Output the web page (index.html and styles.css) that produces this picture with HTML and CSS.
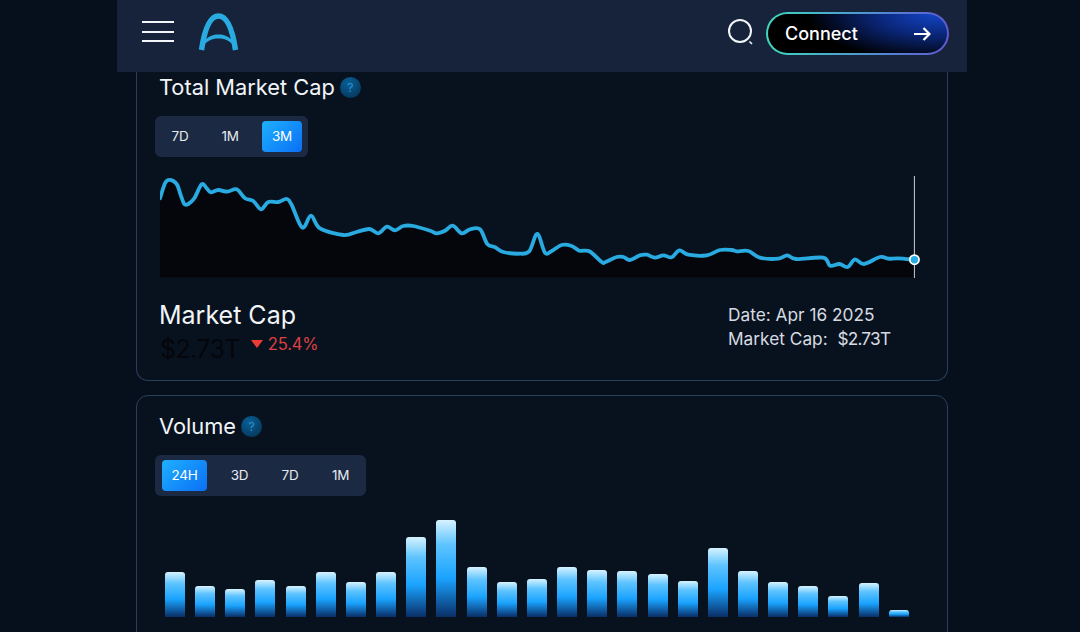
FILE: index.html
```html
<!DOCTYPE html>
<html lang="en">
<head>
  <meta charset="UTF-8">
  <title>Market Overview</title>
  <link rel="stylesheet" href="styles.css">
</head>
<body>
  <div class="page">
    <header class="topbar">
      <div class="menu-icon"><span></span><span></span><span></span></div>
      <svg class="logo" width="42" height="38" viewBox="0 0 42 38">
        <path d="M3.5 37 C6 20 11 3 20.5 3 C30 3 35 20 37.5 37" fill="none" stroke="#29abe2" stroke-width="5.5"/>
        <path d="M5 33 C10 27 15 25.5 20.5 25.5 C26 25.5 31 27 36 33 L35.5 28 C30 23 26 21.5 20.5 21.5 C15 21.5 11 23 5.5 28 Z" fill="#29abe2"/>
      </svg>
      <div class="spacer"></div>
      <svg class="search" width="28" height="28" viewBox="0 0 28 28">
        <circle cx="13" cy="13" r="11" fill="none" stroke="#f2f5f8" stroke-width="2"/>
        <path d="M22.5 23.5 L25 26" stroke="#f2f5f8" stroke-width="1.6"/>
      </svg>
      <button class="connect">
        <span>Connect</span>
        <svg width="18" height="14" viewBox="0 0 18 14">
          <path d="M1 7 H16.5 M10.5 1 L16.5 7 L10.5 13" fill="none" stroke="#fff" stroke-width="2.2"/>
        </svg>
      </button>
    </header>

    <main class="content">
      <section class="card card-top">
        <div class="card-title">Total Market Cap <span class="help">?</span></div>
        <div class="tabs">
          <span class="tab">7D</span>
          <span class="tab">1M</span>
          <span class="tab active">3M</span>
        </div>
        <svg class="line-chart" width="770" height="112" viewBox="160 170 770 112">
          <path id="area" fill="#04060c" d=""/>
          <path id="line" fill="none" stroke="#29abe2" stroke-width="3.8" stroke-linejoin="round" stroke-linecap="round" d=""/>
          <line x1="914.4" y1="176" x2="914.4" y2="278" stroke="#c9ced6" stroke-width="1"/>
          <circle cx="914.4" cy="259.7" r="4.6" fill="#29abe2" stroke="#fff" stroke-width="1.8"/>
        </svg>
        <div class="stats">
          <div>
            <div class="stat-name">Market Cap</div>
            <div class="stat-value">
              <span class="amount">$2.73T</span>
              <span class="down"></span>
              <span class="change">25.4%</span>
            </div>
          </div>
          <div class="stat-side">
            <div>Date: Apr 16 2025</div>
            <div>Market Cap:&nbsp; <span class="side-amount">$2.73T</span></div>
          </div>
        </div>
      </section>

      <section class="card card-cut">
        <div class="card-title">Volume <span class="help">?</span></div>
        <div class="tabs tabs-long">
          <span class="tab active">24H</span>
          <span class="tab">3D</span>
          <span class="tab">7D</span>
          <span class="tab">1M</span>
        </div>
        <div class="bars" id="bars"></div>
      </section>
    </main>
  </div>

  <script>
    const pts = [[160,198.3],[165,183.3],[168.3,180],[173.3,181],[177.3,185],[180.7,195],[184.3,204],[188.3,204],[194.3,198.3],[201.7,184.3],[206.7,188.3],[210.7,192.3],[218.3,190],[227.3,191.7],[236.7,189.3],[245,198.3],[253.3,201],[261,209.3],[268.3,202],[278.3,202],[286.7,199],[291.7,205],[302.3,227.7],[311,215.7],[320,228.3],[343.3,235],[356.7,232],[369.3,229],[378.3,233.3],[386.7,226.7],[395,230.3],[403.3,226],[413.3,226],[430,230.7],[436.7,233.3],[445,230.7],[452.7,225.7],[461.7,233.3],[470,229.3],[480,229.3],[487.3,244],[495,247.3],[503.3,252],[520,253.7],[529.3,251.3],[537.3,234],[545,252.7],[551.7,251],[561.7,245],[571.7,246],[579.3,250.7],[589.3,251.3],[601.7,262],[605,262.3],[616.7,257],[623.3,257],[630,260],[640,255.3],[646.7,254.7],[655,257.7],[663.3,255.3],[671.7,257.3],[679.3,250.3],[688.3,254.7],[706.7,255.3],[720,250],[731.7,250],[736.7,251.3],[748.3,251],[760,257.7],[778.3,258.7],[787.3,255.3],[796,259],[823.3,257.7],[830,265.7],[839.3,264],[847.7,267],[855,259.3],[864,264],[880,257],[888.3,258.7],[898.3,258.3],[914.3,259.7]];

    // smooth the points so the line has no sharp corners
    function smooth(points) {
      let d = 'M' + points[0].join(' ');
      for (let i = 0; i < points.length - 1; i++) {
        const p0 = points[i - 1] || points[i];
        const p1 = points[i];
        const p2 = points[i + 1];
        const p3 = points[i + 2] || p2;
        const c1x = p1[0] + (p2[0] - p0[0]) / 6;
        const c1y = p1[1] + (p2[1] - p0[1]) / 6;
        const c2x = p2[0] - (p3[0] - p1[0]) / 6;
        const c2y = p2[1] - (p3[1] - p1[1]) / 6;
        d += ` C${c1x} ${c1y} ${c2x} ${c2y} ${p2[0]} ${p2[1]}`;
      }
      return d;
    }

    const d = smooth(pts);
    document.getElementById('line').setAttribute('d', d);
    document.getElementById('area').setAttribute('d', d + ' L914.3 277.5 L160 277.5 Z');

    const tops = [571.3,585.7,588.3,580,585.7,571.3,581.3,572,536.7,519.3,567,581.7,578.3,566.7,569.7,570.3,573.3,580.3,547.3,570.3,581.7,585.7,595.7,582.3,610];
    const bars = document.getElementById('bars');
    tops.forEach(t => {
      const bar = document.createElement('div');
      bar.className = 'bar';
      bar.style.height = (616.7 - t) + 'px';
      bars.appendChild(bar);
    });
  </script>
</body>
</html>
```

FILE: styles.css
```css
* {
  box-sizing: border-box;
}
html, body {
  margin: 0;
  height: 632px;
  overflow: hidden;
}
body {
  background: #06101d;
  font-family: Inter, "Liberation Sans", sans-serif;
  color: #f2f5f8;
}
.page {
  width: 850px;
  height: 632px;
  margin-left: 117px;
  overflow: hidden;
}
.topbar {
  display: flex;
  align-items: flex-start;
  height: 72px;
  padding: 0 18px 0 25px;
  background: #16233a;
}
.menu-icon {
  display: flex;
  flex-direction: column;
  gap: 7.7px;
  width: 32px;
  margin: 21px 24px 0 0;
}
.menu-icon span {
  height: 2px;
  background: #f2f5f8;
}
.logo {
  margin-top: 13px;
}
.spacer {
  flex: 1;
}
.search {
  margin: 18px 11px 0 0;
}
.connect {
  display: flex;
  align-items: center;
  justify-content: space-between;
  width: 183px;
  height: 43px;
  padding: 0 16px 0 17px;
  margin-top: 12px;
  border: 2px solid transparent;
  border-radius: 22px;
  background:
    radial-gradient(ellipse 70% 120% at 92% 0%, #1244c4 0%, #0a2678 45%, #000 100%) padding-box,
    linear-gradient(90deg, #3fd8bb, #4f9bd0 50%, #6058d0) border-box;
  color: #fff;
  font: 500 18px Inter, "Liberation Sans", sans-serif;
}
.content {
  padding: 0 19px;
}
.card {
  background: #08121f;
  border: 1px solid #2a3f5a;
  border-radius: 12px;
  padding: 15px 23px 13px;
  margin-bottom: 14px;
}
.card-top {
  border-top: 0;
  border-radius: 0 0 12px 12px;
  padding-top: 0;
}
/* runs on below the fold */
.card-cut {
  height: 260px;
  margin-bottom: 0;
}
.card-title {
  display: flex;
  align-items: center;
  gap: 5px;
  height: 30px;
  margin-left: -1px;
  font-size: 21.8px;
}
.help {
  display: flex;
  align-items: center;
  justify-content: center;
  width: 21px;
  height: 21px;
  border-radius: 50%;
  background: radial-gradient(circle at 40% 30%, #0a5f98, #03304f);
  color: #2b93cc;
  font-size: 12px;
}
.tabs {
  display: inline-flex;
  gap: 14px;
  margin: 14px 0 0 -5px;
  padding: 5px 6px 5px 7px;
  background: #1b2942;
  border-radius: 6px;
  font-size: 13.5px;
  letter-spacing: -0.3px;
}
.tabs-long {
  gap: 14.5px;
  padding-right: 7px;
}
.tab {
  display: flex;
  align-items: center;
  justify-content: center;
  width: 36px;
  height: 31px;
  padding-bottom: 1px;
  border-radius: 4px;
  color: #e6eaf0;
}
.tab.active {
  width: 40px;
  background: linear-gradient(135deg, #1fb0ff, #0a6ff5);
  color: #fff;
}
.tabs-long .tab.active {
  width: 45px;
}
.line-chart {
  display: block;
  margin-top: 13px;
}
.stats {
  display: flex;
  justify-content: space-between;
  margin-top: 17px;
}
.stat-name {
  margin-left: -1px;
  font-size: 25px;
  line-height: 32px;
}
.stat-value {
  display: flex;
  align-items: center;
  height: 36px;
}
.amount {
  font-size: 25px;
  letter-spacing: -0.6px;
  color: #04060b;
}
.down {
  width: 0;
  height: 0;
  margin: -10px 5px 0 11px;
  border-left: 6.5px solid transparent;
  border-right: 6.5px solid transparent;
  border-top: 8px solid #ee3b36;
}
.change {
  font-size: 16.6px;
  letter-spacing: -0.2px;
  color: #dc4142;
  margin-top: -11px;
}
.stat-side {
  width: 196px;
  margin-top: 4px;
  font-size: 17.3px;
  line-height: 24px;
  color: #d7dbe1;
}
.side-amount {
  letter-spacing: -0.8px;
}
.bars {
  display: flex;
  align-items: flex-end;
  justify-content: space-between;
  width: 744px;
  height: 105px;
  margin: 16px 0 0 5px;
}
.bar {
  width: 20px;
  border-radius: 3px 3px 0 0;
  background: linear-gradient(180deg, #d6f3ff 0%, #5fc4ff 25%, #1aa3ff 60%, #0a2e66 100%);
}
```
